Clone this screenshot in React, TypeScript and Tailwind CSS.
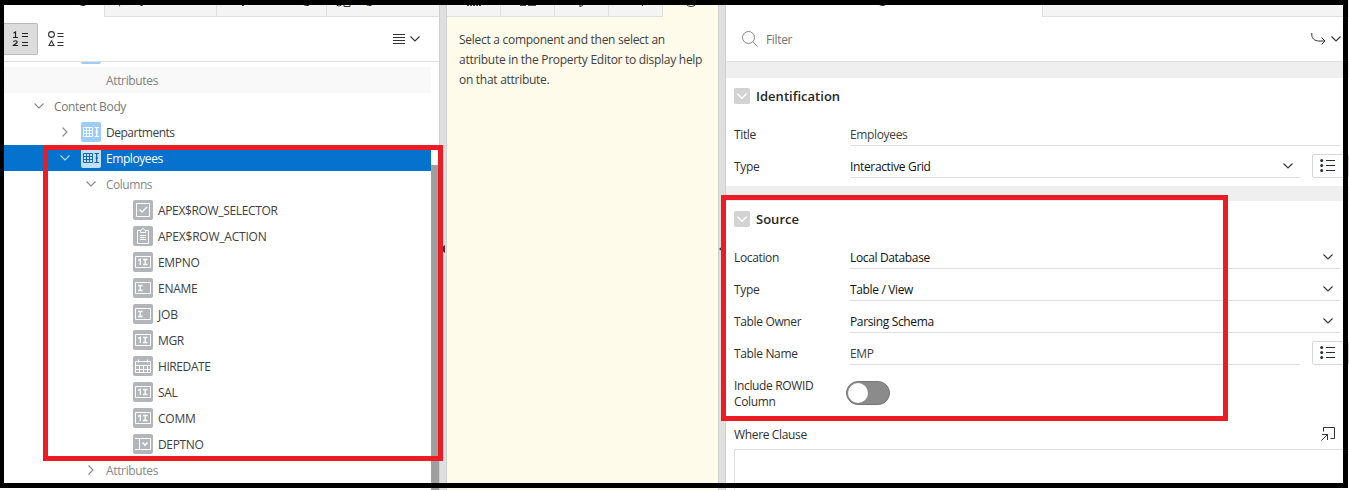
import type { ReactNode } from 'react';

type P = { className?: string };

const Chevron = ({ className = '' }: P) => (
  <svg viewBox="0 0 12 12" width="12" height="12" fill="none" stroke="currentColor" strokeWidth="1.1" className={'shrink-0 ' + className}>
    <path d="M1.5 3.5 6 8l4.5-4.5" />
  </svg>
);

const ListLines = () => (
  <svg viewBox="0 0 16 14" width="16" height="14" className="shrink-0">
    <g fill="#2b2f3a">
      <circle cx="1.7" cy="2.5" r="1.5" />
      <circle cx="1.7" cy="7.5" r="1.5" />
      <circle cx="1.7" cy="12.5" r="1.5" />
      <path d="M6 2h9v1H6zM6 7h9v1H6zM6 12h9v1H6z" />
    </g>
  </svg>
);

type Kind = 'grid' | 'check' | 'clip' | 'num' | 'text' | 'date' | 'select';

const glyphs: Record<Kind, ReactNode> = {
  grid: (
    <>
      <path d="M2.500 5.500h9v9h-9zM2.500 8.500h9M2.500 11.500h9M5.500 5.500v9M8.500 5.500v9" strokeWidth="0.9" />
      <path d="M13.500 5.500h4.500M13.500 14.500h4.500M15.700 5.500v9M14.500 10h2.500" strokeWidth="1.2" />
    </>
  ),
  check: (
    <>
      <path d="M3.500 3.500h13v13h-13z" />
      <path d="m6.500 9.500 2.500 2.500 5-5" strokeWidth="1.3" />
    </>
  ),
  clip: <path d="M7.500 4.500h-3v13h11v-13h-3M7.500 6.500v-2l2.500-2 2.500 2v2zM7 9.500h6M7 11.500h6M7 13.500h6" />,
  num: (
    <>
      <path d="M2.500 4.500h15v11h-15z" />
      <path d="M5 8.300l2.300-1.100v5.800M10 7.500h4.500M10 12.500h4.500M12.200 7.500v5" strokeWidth="1.3" />
    </>
  ),
  text: (
    <>
      <path d="M2.500 4.500h15v11h-15z" />
      <path d="M5 7.500h4.500M5 12.500h4.500M7.200 7.500v5" strokeWidth="1.3" />
    </>
  ),
  date: <path d="M2.500 5.500h15v11h-15zM2.500 9.500h15M2.500 13.500h15M6.500 9.500v7M10.500 9.500v7M14.500 9.500v7M5.500 3.500v3M14.500 3.500v3" />,
  select: (
    <>
      <path d="M2 4.500h15.500v11H2M6.500 4.500v11" />
      <path d="m9.500 8.500 2.500 2.700 2.500-2.700" strokeWidth="1.7" />
    </>
  ),
};

const NodeIcon = ({ kind, className }: { kind: Kind; className: string }) => (
  <svg viewBox="0 0 20 20" width="20" height="20" fill="none" stroke="currentColor" className={'mr-[5px] shrink-0 rounded-[2px] ' + className}>
    {glyphs[kind]}
  </svg>
);

const columns: { name: string; kind: Kind; cls: string }[] = [
  { name: 'APEX$ROW_SELECTOR', kind: 'check', cls: 'tracking-[-0.35px]' },
  { name: 'APEX$ROW_ACTION', kind: 'clip', cls: 'tracking-[-0.22px]' },
  { name: 'EMPNO', kind: 'num', cls: 'tracking-[-0.3px]' },
  { name: 'ENAME', kind: 'text', cls: 'tracking-[-0.25px]' },
  { name: 'JOB', kind: 'text', cls: 'tracking-[-0.1px]' },
  { name: 'MGR', kind: 'num', cls: 'tracking-[-0.35px]' },
  { name: 'HIREDATE', kind: 'date', cls: 'tracking-[-0.42px]' },
  { name: 'SAL', kind: 'num', cls: 'tracking-[-0.35px]' },
  { name: 'COMM', kind: 'num', cls: 'tracking-[-0.25px]' },
  { name: 'DEPTNO', kind: 'select', cls: 'tracking-[-0.35px]' },
];

const Tab = ({ children, className = '' }: { children?: ReactNode; className?: string }) => (
  <div className={'flex h-[17px] shrink-0 items-start overflow-hidden border-b border-[#dfdfdf] bg-[#f4f4f4] whitespace-nowrap text-[#222] ' + className}>
    {children}
  </div>
);

const TabText = ({ children }: { children: ReactNode }) => <span className="mt-[-9px] leading-4">{children}</span>;

const Label = ({ children, className = '' }: { children: ReactNode; className?: string }) => <span className={'pt-[2px] ' + className}>{children}</span>;

const Splitter = () => (
  <div className="flex w-2 shrink-0 items-center border-x border-[#cfcfcf] bg-[#dfdfdf] pt-2">
    <svg viewBox="0 0 5 8" width="5" height="8">
      <path d="M5 0v8L0 4z" fill="#333" />
    </svg>
  </div>
);

const Field = ({ label, value, arrow, button, muted }: { label: string; value: string; arrow?: boolean; button?: boolean; muted?: boolean }) => (
  <div className="flex h-8 pl-2">
    <div className="w-[116px] shrink-0 pt-[13px] leading-4 text-[#303030]">{label}</div>
    <div className={'flex h-8 shrink-0 items-start justify-between border-b border-[#dfdfdf] pt-[13px] leading-4 ' + (button ? 'w-[450px] ' : 'w-[490px] ') + (muted ? 'text-[#404040]' : 'text-[#111]')}>
      <span>{value}</span>
      {arrow && <Chevron className="mt-px mr-1.5 text-[#333]" />}
    </div>
    {button && (
      <div className="mt-2 ml-3 h-6 w-[38px] rounded-[2px] border border-[#d8d8d8] pt-[3px] pl-[7px]">
        <ListLines />
      </div>
    )}
  </div>
);

const SectionTitle = ({ children }: { children: ReactNode }) => (
  <div className="flex h-9 items-center pl-2">
    <span className="mr-1.5 flex size-4 items-center justify-center rounded-[2px] bg-[#d3d3d3] text-white">
      <svg viewBox="0 0 12 12" width="12" height="12" fill="none" stroke="currentColor" strokeWidth="1.6">
        <path d="M1.500 3.800 6 8.200l4.500-4.400" />
      </svg>
    </span>
    <h2 className="text-[13px] leading-4 font-semibold tracking-[0.02px] text-[#262626]">{children}</h2>
  </div>
);

export default function App() {
  return (
    <div className="relative flex h-[490px] w-[1349px] overflow-hidden bg-white pl-1 font-['Open_Sans','Noto_Sans',sans-serif] text-[12px] tracking-[-0.35px] text-[#404040]">
      <section className="flex w-[435px] shrink-0 flex-col">
        <div className="flex">
          <Tab className="w-[100px] justify-end border-b-white bg-white pr-[18px]"><TabText>Rendering</TabText></Tab>
          <Tab className="w-[112px] border-l pl-2">
            <svg viewBox="0 0 16 16" width="16" height="16" className="mt-[-9px] mr-[3px] shrink-0"><path d="M9 0 3 9h4l-1 7 6-9H8z" fill="#333" /></svg>
            <TabText>Dynamic Actions</TabText>
          </Tab>
          <Tab className="w-[110px] border-l pl-[18px]">
            <svg viewBox="0 0 16 16" width="16" height="16" className="mt-[-9px] mr-[2px] shrink-0"><path d="M8 15V9M5.500 12 8 15l2.500-3" stroke="#333" fill="none" /></svg>
            <TabText>Processing</TabText>
          </Tab>
          <Tab className="w-[113px] border-l pl-2">
            <svg viewBox="0 0 16 16" width="16" height="16" className="mt-[-9px] mr-[2px] shrink-0"><g stroke="#333" fill="none"><circle cx="4" cy="12" r="3" /><path d="M9 9.500h6v6H9z" /></g></svg>
            <TabText>Page Shared Comp</TabText>
          </Tab>
        </div>
        <div className="flex h-[45px] shrink-0 items-center border-b border-[#dfdfdf]">
          <div className="flex h-8 w-[34px] items-center justify-center rounded-r-[2px] border border-l-0 border-[#bababa] bg-[#dcdcdc]">
            <svg viewBox="0 0 18 18" width="18" height="18" fill="none" stroke="#222" strokeWidth="1.200">
              <path d="m1.500 3 2-1V7.500M1 7.500h5" />
              <path d="M1.500 11.800c.3-1.400 3.700-1.500 3.700.2 0 1.200-2.200 2-3.700 3.500h4.500" />
              <path d="M10 3.500h6M10 6.500h6M10 12.500h6M10 15.500h6" strokeWidth="1" />
            </svg>
          </div>
          <svg viewBox="0 0 18 18" width="18" height="18" className="ml-[9px]" fill="none" stroke="#333" strokeWidth="1.100">
            <circle cx="4.500" cy="4.500" r="2.900" />
            <path d="m4.500 10.800-2.500 4.700h5z" />
            <path d="M10.500 3.500h6M10.500 6.500h6M10.500 12.500h6M10.500 15.500h6" strokeWidth="1" />
          </svg>
          <svg viewBox="0 0 12 11" width="12" height="11" className="ml-[328px]"><path d="M0 .5h12M0 3.500h12M0 6.500h12M0 9.500h12" stroke="#333" /></svg>
          <Chevron className="ml-1 text-[#333]" />
        </div>
        <div className="flex h-[428px] leading-[26px]">
          <div className="w-[427px]">
            <div className="flex h-[5px] pl-[77px]"><span className="h-[2px] w-5 rounded-b-[2px] bg-[#9dcdf5]" /></div>
            <div className="flex h-[26px] items-center bg-[#f9f9f9] pl-[102px] text-[#808080]"><Label>Attributes</Label></div>
            <div className="flex h-[26px] items-center pl-[29px] text-[#787878]"><Chevron className="mr-[9px] text-[#888]" /><Label>Content Body</Label></div>
            <div className="flex h-[26px] items-center pl-[55px]">
              <Chevron className="mr-[10px] -rotate-90 text-[#888]" /><NodeIcon kind="grid" className="bg-[#9dcdf5] text-white" /><Label className="tracking-[-0.48px]">Departments</Label>
            </div>
            <div className="flex h-[26px] items-center bg-[#0572ce] pl-[55px] text-white">
              <Chevron className="mr-[10px] text-[#b9daf3]" /><NodeIcon kind="grid" className="bg-[#c3dff5] text-[#0560ad]" /><Label className="tracking-[-0.42px]">Employees</Label>
            </div>
            <div className="flex h-[26px] items-center pl-[81px] text-[#888]"><Chevron className="mr-[9px]" /><Label className="tracking-[-0.48px]">Columns</Label></div>
            {columns.map((c) => (
              <div key={c.name} className="flex h-[26px] items-center pl-[129px]">
                <NodeIcon kind={c.kind} className="bg-[#b2b6ba] text-white" />
                <Label className={c.cls}>{c.name}</Label>
              </div>
            ))}
            <div className="flex h-[26px] items-center pl-[81px] text-[#888]"><Chevron className="mr-[9px] -rotate-90" /><Label>Attributes</Label></div>
          </div>
          <div className="mt-[103px] w-2 bg-[#9f9f9f]" />
        </div>
      </section>

      <Splitter />

      <section className="w-[271px] shrink-0 bg-[#fffbea]">
        <div className="flex">
          <Tab className="w-[54px] justify-center border-r">
            <svg viewBox="0 0 16 16" width="16" height="16" className="mt-[-9px]"><path d="M1 14.500h14" stroke="#444" strokeDasharray="2 1" fill="none" /></svg>
          </Tab>
          <Tab className="w-[54px] justify-center border-r">
            <svg viewBox="0 0 16 16" width="16" height="16" className="mt-[-9px]"><path d="M0 14.500h6M8 14.500h8" stroke="#444" fill="none" /></svg>
          </Tab>
          <Tab className="w-[54px] justify-center border-r">
            <svg viewBox="0 0 16 16" width="16" height="16" className="mt-[-9px]"><path d="M6 13v3l3-2" stroke="#333" fill="none" /></svg>
          </Tab>
          <Tab className="w-[54px] justify-center border-r">
            <svg viewBox="0 0 16 16" width="16" height="16" className="mt-[-9px]"><path d="M14.500 2v13" stroke="#333" fill="none" /></svg>
          </Tab>
          <Tab className="w-[55px] justify-center border-b-[#fffbea] bg-[#fffbea]">
            <svg viewBox="0 0 16 16" width="16" height="16" className="mt-[-9px]"><circle cx="8" cy="9" r="6.500" stroke="#333" fill="none" /><path d="M8 6v8" stroke="#333" /></svg>
          </Tab>
        </div>
        <p className="pt-[13px] pl-3 leading-5 tracking-[-0.28px] whitespace-nowrap">
          Select a component and then select an<br />
          attribute in the Property Editor to display help<br />
          on that attribute.
        </p>
      </section>

      <Splitter />

      <section className="flex w-[623px] shrink-0 flex-col">
        <div className="flex">
          <Tab className="w-[316px] justify-center border-b-white bg-white"><TabText>Region</TabText></Tab>
          <Tab className="w-[307px] border-l" />
        </div>
        <div className="flex h-[45px] shrink-0 items-center border-b border-[#dfdfdf] pl-4 text-[#737373]">
          <svg viewBox="0 0 16 16" width="16" height="16" fill="none" stroke="#888"><circle cx="6.500" cy="6.500" r="6" /><path d="m10.800 10.800 4.700 4.700" /></svg>
          <span className="ml-2 flex-1 pt-[2px]">Filter</span>
          <svg viewBox="0 0 15 14" width="15" height="14" fill="none" stroke="#333" className="mr-1"><path d="M.8 1v2c0 3.500 3 6 7 6H14M10.500 5.500 14 9l-3.500 3.500" /></svg>
          <Chevron className="mr-[7px] text-[#333]" />
        </div>
        <div className="h-4 shrink-0 bg-[#efefef]" />
        <div className="shrink-0 pb-2">
          <SectionTitle>Identification</SectionTitle>
          <Field label="Title" value="Employees" muted />
          <Field label="Type" value="Interactive Grid" arrow button />
        </div>
        <div className="h-[15px] shrink-0 bg-[#efefef]" />
        <div className="shrink-0">
          <SectionTitle>Source</SectionTitle>
          <Field label="Location" value="Local Database" arrow />
          <Field label="Type" value="Table / View" arrow />
          <Field label="Table Owner" value="Parsing Schema" arrow />
          <Field label="Table Name" value="EMP" button muted />
          <div className="flex h-[53px] pl-2">
            <div className="w-[112px] pt-[13px] leading-4 text-[#303030]">Include ROWID<br />Column</div>
            <div className="mt-4 flex h-6 w-11 items-center rounded-full border border-[#777] bg-[#8b8b8b] px-px">
              <span className="size-5 rounded-full bg-white" />
            </div>
          </div>
          <div className="flex h-[31px] items-center pr-[14px] pl-2 text-[#303030]">
            <span className="flex-1 pt-[2px]">Where Clause</span>
            <svg viewBox="0 0 14 14" width="14" height="14" fill="none" stroke="#333"><path d="M2.500 4.500v-4h11v11h-4M.5 13.500l6-6M1 7.500h5.500v5.500" /></svg>
          </div>
          <div className="ml-2 h-[50px] border border-r-0 border-[#dfdfdf]" />
        </div>
      </section>

      <div className="absolute top-[145px] left-[43px] h-[316px] w-[400px] border-5 border-[#ed1c24]" />
      <div className="absolute top-[195px] left-[721px] h-[226px] w-[507px] border-5 border-[#ed1c24]" />
      <div className="absolute top-0 left-0 h-[488px] w-[1348px] border-5 border-l-4 border-black" />
    </div>
  );
}
